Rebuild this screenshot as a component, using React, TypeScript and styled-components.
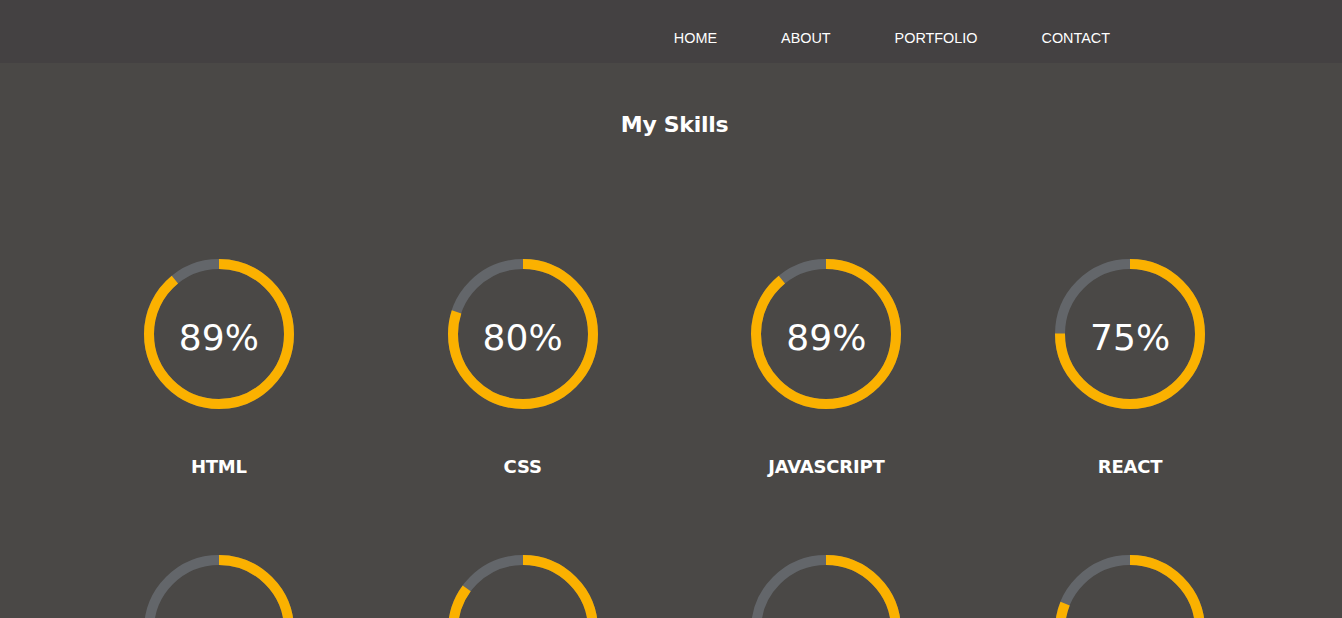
import React from "react";
import styled, { createGlobalStyle } from "styled-components";

const Global = createGlobalStyle`
  html, body { margin: 0; padding: 0; background: #4a4846; }
  body { font-family: "DejaVu Sans", sans-serif; color: #fff; overflow: hidden; }
  * { box-sizing: border-box; }
`;

const Nav = styled.nav`
  height: 63px;
  background: #444142;
  display: flex;
  align-items: center;
  justify-content: flex-end;
  padding-right: 200px;
`;

const NavList = styled.ul`
  display: flex;
  list-style: none;
  margin: 0;
  padding: 0;
`;

const NavItem = styled.li`
  font-family: "Liberation Sans", Arial, sans-serif;
  font-size: 14.4px;
  color: #fff;
  padding: 0 32px;
  margin-top: 13px;
  line-height: 24px;
`;

const Section = styled.section`
  padding: 46px 60px 0 67px;
`;

const Title = styled.h2`
  margin: 0 0 120px;
  text-align: center;
  font-size: 22px;
  line-height: 30px;
  padding-top: 1px;
  margin-bottom: 119px;
  font-weight: 700;
  letter-spacing: -0.3px;
`;

const Grid = styled.div`
  display: grid;
  grid-template-columns: repeat(4, 1fr);
  row-gap: 77px;
`;

const Card = styled.div`
  display: flex;
  flex-direction: column;
  align-items: center;
`;

const Ring = styled.div`
  position: relative;
  width: 150px;
  height: 150px;
`;

const Percent = styled.span`
  position: absolute;
  inset: 0;
  display: flex;
  align-items: center;
  justify-content: center;
  padding-top: 6px;
  font-size: 36px;
  font-weight: 400;
`;

const Label = styled.h3`
  margin: 47px 0 0;
  font-size: 18px;
  line-height: 22px;
  font-weight: 700;
  letter-spacing: -0.2px;
`;

const R = 70;
const C = 2 * Math.PI * R;

function Progress({ value }: { value: number }) {
  return (
    <svg width="150" height="150" viewBox="0 0 150 150">
      <circle cx="75" cy="75" r={R} fill="none" stroke="#63666a" strokeWidth="10" />
      <circle
        cx="75"
        cy="75"
        r={R}
        fill="none"
        stroke="#fbb100"
        strokeWidth="10"
        strokeDasharray={`${(C * value) / 100} ${C}`}
        transform="rotate(-90 75 75)"
      />
    </svg>
  );
}

const skills = [
  { name: "HTML", value: 89 },
  { name: "CSS", value: 80 },
  { name: "JAVASCRIPT", value: 89 },
  { name: "REACT", value: 75 },
  { name: "NODE JS", value: 60 },
  { name: "BOOTSTRAP", value: 85 },
  { name: "SASS", value: 65 },
  { name: "GIT", value: 81 },
];

export default function App() {
  return (
    <>
      <Global />
      <Nav>
        <NavList>
          {["HOME", "ABOUT", "PORTFOLIO", "CONTACT"].map((n) => (
            <NavItem key={n}>{n}</NavItem>
          ))}
        </NavList>
      </Nav>
      <Section>
        <Title>My Skills</Title>
        <Grid>
          {skills.map((s) => (
            <Card key={s.name}>
              <Ring>
                <Progress value={s.value} />
                <Percent>{s.value}%</Percent>
              </Ring>
              <Label>{s.name}</Label>
            </Card>
          ))}
        </Grid>
      </Section>
    </>
  );
}
